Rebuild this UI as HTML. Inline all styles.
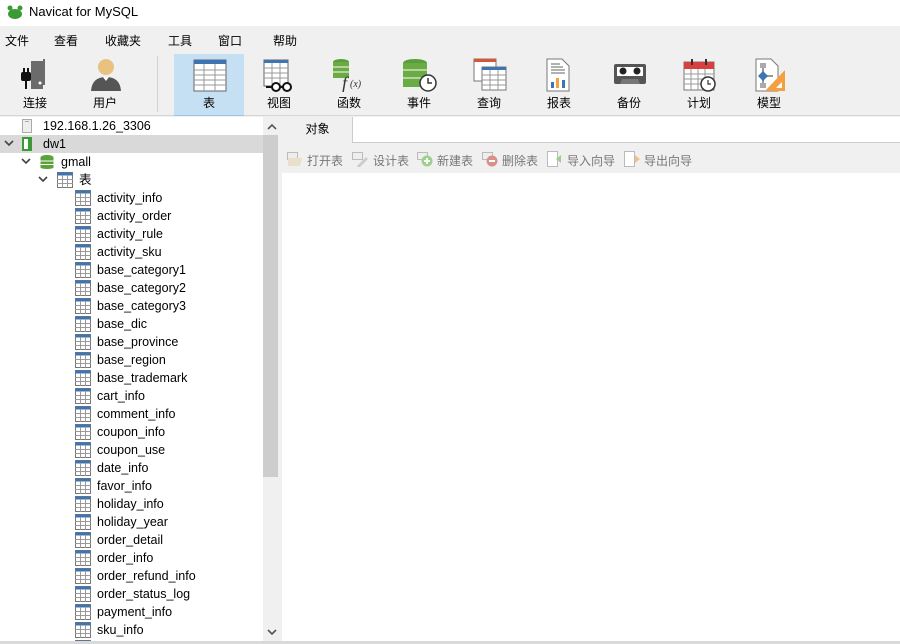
<!DOCTYPE html>
<html><head><meta charset="utf-8">
<style>
*{margin:0;padding:0;box-sizing:border-box}
body{width:900px;height:644px;overflow:hidden;background:#f0f0f0;font-family:"Liberation Sans","Noto Sans CJK SC",sans-serif;font-size:12px;color:#000;position:relative}
.abs{position:absolute}
#title{left:0;top:0;width:900px;height:26px;background:#fff}
#title span{position:absolute;left:29px;top:4px;font-size:13px}
#menu{top:26px;left:0;width:900px;height:26px;background:#f0f0f0}
#menu span{position:absolute;top:6px;font-size:12px}
#tb{top:52px;left:0;width:900px;height:64px;background:#f0f0f0;border-bottom:1px solid #d6d6d6}
.btn{position:absolute;top:2px;width:70px;height:62px;text-align:center}
.btn svg{position:absolute;left:19px;top:4px}
.btn .l{position:absolute;left:0;width:100%;top:40px;font-size:12px}
#left{left:0;top:117px;width:263px;height:524px;background:#fff;overflow:hidden}
.row{position:absolute;left:0;width:263px;height:18px;line-height:18px;font-size:12.5px;white-space:nowrap}
.row span{position:absolute}
.chev{position:absolute;top:5px}
#sb{left:263px;top:117px;width:18px;height:524px;background:#f0f0f0}
#thumb{left:263px;top:135px;width:15px;height:342px;background:#cdcdcd}
#bottom{left:0;top:641px;width:900px;height:3px;background:#d9d9d9}
</style></head><body>
<div id="title" class="abs">
<svg class="abs" style="left:7px;top:5px" width="16" height="14" viewBox="0 0 16 14"><ellipse cx="8" cy="9" rx="7" ry="5" fill="#3a9b34"/><circle cx="3" cy="3" r="2.5" fill="#3a9b34"/><circle cx="13" cy="3" r="2.5" fill="#3a9b34"/></svg>
<span>Navicat for MySQL</span></div>
<div id="menu" class="abs">
<span style="left:5px">文件</span><span style="left:54px">查看</span><span style="left:105px">收藏夹</span><span style="left:168px">工具</span><span style="left:218px">窗口</span><span style="left:273px">帮助</span></div>
<div id="tb" class="abs">
 <div class="btn" style="left:0">
  <svg width="34" height="34" viewBox="0 0 34 34"><rect x="12" y="3" width="12" height="28" fill="#6b6b6b"/><rect x="24" y="1" width="2" height="26" fill="#6b6b6b"/><circle cx="21" cy="25" r="1.5" fill="#fff"/><rect x="2" y="14" width="10" height="9" rx="2" fill="#111"/><rect x="4" y="10" width="2" height="5" fill="#111"/><rect x="8" y="10" width="2" height="5" fill="#111"/><rect x="6" y="22" width="2" height="9" fill="#111"/></svg>
  <div class="l">连接</div></div>
 <div class="btn" style="left:70px">
  <svg width="34" height="34" viewBox="0 0 34 34"><circle cx="17" cy="9" r="8" fill="#e8c27e"/><path d="M2 33 Q3 19 17 19 Q31 19 32 33Z" fill="#555"/><path d="M14 19 L17 23 L20 19Z" fill="#fff"/></svg>
  <div class="l">用户</div></div>
 <div class="abs" style="left:157px;top:4px;width:1px;height:56px;background:#d0d0d0"></div>
 <div class="btn" style="left:174px;width:70px;background:#c5dff3;border-bottom:1px solid #9cc4e8">
  <svg width="34" height="34" viewBox="0 0 34 34"><rect x="1" y="2" width="32" height="31" fill="#fff" stroke="#666"/><rect x="1" y="2" width="32" height="4" fill="#3f74b3"/><path d="M1 12H33M1 17H33M1 22H33M1 27H33M11 6V33M22 6V33" stroke="#999"/></svg>
  <div class="l">表</div></div>
 <div class="btn" style="left:244px">
  <svg width="34" height="34" viewBox="0 0 34 34"><rect x="1" y="2" width="24" height="26" fill="#fff" stroke="#666"/><rect x="1" y="2" width="24" height="3" fill="#3f74b3"/><path d="M1 10H25M1 15H25M1 20H25M9 5V28M17 5V28" stroke="#999"/><circle cx="13" cy="29" r="4" fill="#fff" stroke="#111" stroke-width="2"/><circle cx="24" cy="29" r="4" fill="#fff" stroke="#111" stroke-width="2"/><path d="M17 29H20M9 29H3" stroke="#111" stroke-width="2"/></svg>
  <div class="l">视图</div></div>
 <div class="btn" style="left:314px">
  <svg width="34" height="34" viewBox="0 0 34 34"><ellipse cx="8" cy="4" rx="8" ry="3" fill="#5a9e3c"/><rect x="0" y="4" width="16" height="16" fill="#6aab44"/><path d="M0 9H16M0 14H16" stroke="#fff"/><text x="9" y="31" font-family="Liberation Serif" font-style="italic" font-size="18" fill="#333">f</text><text x="17" y="29" font-family="Liberation Serif" font-style="italic" font-size="10" fill="#333">(x)</text></svg>
  <div class="l">函数</div></div>
 <div class="btn" style="left:384px">
  <svg width="34" height="34" viewBox="0 0 34 34"><ellipse cx="12" cy="5" rx="12" ry="4" fill="#5a9e3c"/><rect x="0" y="5" width="24" height="24" fill="#6aab44"/><path d="M0 12H24M0 20H24" stroke="#fff"/><circle cx="25" cy="25" r="8" fill="#fff" stroke="#333" stroke-width="1.5"/><path d="M25 20V25H29" stroke="#333" stroke-width="1.5" fill="none"/></svg>
  <div class="l">事件</div></div>
 <div class="btn" style="left:454px">
  <svg width="34" height="34" viewBox="0 0 34 34"><rect x="1" y="1" width="22" height="22" fill="#fff" stroke="#777"/><rect x="1" y="1" width="22" height="3" fill="#d9543a"/><rect x="9" y="9" width="24" height="23" fill="#fff" stroke="#777"/><rect x="9" y="9" width="24" height="3" fill="#3f74b3"/><path d="M9 17H33M9 22H33M9 27H33M17 12V32M25 12V32" stroke="#999"/></svg>
  <div class="l">查询</div></div>
 <div class="btn" style="left:524px">
  <svg width="34" height="34" viewBox="0 0 34 34"><path d="M4 1H19L26 8V33H4Z" fill="#fff" stroke="#777"/><path d="M8 6H17M8 9H20M8 12H22M8 15H22" stroke="#666"/><rect x="8" y="24" width="3" height="6" fill="#3f74b3"/><rect x="13" y="20" width="3" height="10" fill="#f5a040"/><rect x="19" y="22" width="3" height="8" fill="#3f74b3"/></svg>
  <div class="l">报表</div></div>
 <div class="btn" style="left:594px">
  <svg width="34" height="34" viewBox="0 0 34 34"><rect x="1" y="6" width="32" height="20" rx="2" fill="#555"/><rect x="4" y="9" width="26" height="9" fill="#fff"/><circle cx="10" cy="13" r="3.5" fill="#222"/><circle cx="24" cy="13" r="3.5" fill="#222"/><path d="M7 26L9 21H25L27 26" fill="#777"/></svg>
  <div class="l">备份</div></div>
 <div class="btn" style="left:664px">
  <svg width="34" height="34" viewBox="0 0 34 34"><rect x="1" y="4" width="30" height="28" fill="#fff" stroke="#777"/><rect x="1" y="4" width="30" height="7" fill="#d84040"/><rect x="8" y="1" width="2" height="6" fill="#333"/><rect x="22" y="1" width="2" height="6" fill="#333"/><path d="M1 16H31M1 21H31M1 26H31M8 11V32M15 11V32M22 11V32" stroke="#999"/><circle cx="25" cy="26" r="7" fill="#fff" stroke="#333" stroke-width="1.5"/><path d="M25 22V26H28" stroke="#333" stroke-width="1.2" fill="none"/></svg>
  <div class="l">计划</div></div>
 <div class="btn" style="left:734px">
  <svg width="34" height="34" viewBox="0 0 34 34"><path d="M3 1H18L25 8V33H3Z" fill="#fff" stroke="#777"/><path d="M10 8V28M10 18H20" stroke="#999" stroke-width="2"/><rect x="7" y="5" width="6" height="5" fill="#aaa"/><rect x="7" y="25" width="6" height="5" fill="#aaa"/><path d="M10 13L15 18L10 23L5 18Z" fill="#3f74b3"/><path d="M32 12V33H12Z" fill="#f5a040"/><path d="M29 24V30H23Z" fill="#fff"/></svg>
  <div class="l">模型</div></div>
</div>

<div id="left" class="abs">
 <div class="row" style="top:0"><svg class="abs" style="left:22px;top:2px" width="10" height="14"><rect x="0.5" y="0.5" width="9" height="13" fill="#eee" stroke="#aaa"/><rect x="3" y="2" width="4" height="1" fill="#aaa"/></svg><span style="left:43px">192.168.1.26_3306</span></div>
 <div class="row" style="top:18px;background:#d9d9d9"><svg class="chev" style="left:4px" width="10" height="7"><path d="M1 1L5 5L9 1" stroke="#444" stroke-width="1.6" fill="none"/></svg><svg class="abs" style="left:22px;top:2px" width="10" height="14"><rect x="0" y="0" width="10" height="14" fill="#3a9b34"/><rect x="2" y="2" width="4" height="10" fill="#fff"/></svg><span style="left:43px">dw1</span></div>
 <div class="row" style="top:36px"><svg class="chev" style="left:21px" width="10" height="7"><path d="M1 1L5 5L9 1" stroke="#444" stroke-width="1.6" fill="none"/></svg><svg class="abs" style="left:40px;top:2px" width="14" height="14"><ellipse cx="7" cy="2.5" rx="6.5" ry="2.5" fill="#5aa23a"/><rect x="0.5" y="2.5" width="13" height="10" fill="#5aa23a"/><ellipse cx="7" cy="12.5" rx="6.5" ry="1.5" fill="#5aa23a"/><path d="M0.5 6H13.5M0.5 9.5H13.5" stroke="#fff"/></svg><span style="left:61px">gmall</span></div>
 <div class="row" style="top:54px"><svg class="chev" style="left:38px" width="10" height="7"><path d="M1 1L5 5L9 1" stroke="#444" stroke-width="1.6" fill="none"/></svg><svg class="abs" style="left:57px;top:1px" width="16" height="16"><rect x="0.5" y="0.5" width="15" height="15" fill="#fff" stroke="#777"/><rect x="0.5" y="0.5" width="15" height="3" fill="#3f74b3"/><path d="M0 7.5H16M0 11.5H16M5.5 3V16M10.5 3V16" stroke="#999"/></svg><span style="left:79px">表</span></div>
 <div id="items"></div>
</div>
<div id="sb" class="abs"><svg class="abs" style="left:4px;top:6px" width="10" height="7"><path d="M1 6L5 2L9 6" stroke="#555" stroke-width="1.6" fill="none"/></svg><svg class="abs" style="left:4px;top:512px" width="10" height="7"><path d="M1 1L5 5L9 1" stroke="#555" stroke-width="1.6" fill="none"/></svg></div>
<div id="thumb" class="abs"></div>

<div class="abs" style="left:282px;top:117px;width:71px;height:26px;background:#f0f0f0;text-align:center;line-height:25px;font-size:12px">对象</div>
<div class="abs" style="left:352px;top:117px;width:548px;height:26px;background:#fff;border-left:1px solid #ccc;border-bottom:1px solid #ccc"></div>
<div class="abs" style="left:282px;top:143px;width:618px;height:30px;background:#f0f0f0;color:#777;font-size:12px">
 <svg class="abs" style="left:5px;top:9px" width="16" height="15"><rect x="0.5" y="0.5" width="10" height="7" fill="#eee" stroke="#bbb"/><path d="M1 6H15L13 14H1Z" fill="#eadfc8"/></svg><span class="abs" style="left:25px;top:9px">打开表</span>
 <svg class="abs" style="left:70px;top:9px" width="16" height="15"><rect x="0.5" y="0.5" width="10" height="7" fill="#eee" stroke="#bbb"/><path d="M5 14L14 5L16 7L7 16Z" fill="#ccc"/></svg><span class="abs" style="left:91px;top:9px">设计表</span>
 <svg class="abs" style="left:135px;top:9px" width="16" height="15"><rect x="0.5" y="0.5" width="10" height="7" fill="#eee" stroke="#bbb"/><circle cx="10" cy="9" r="5.5" fill="#9fd08b"/><path d="M10 6V12M7 9H13" stroke="#fff" stroke-width="2"/></svg><span class="abs" style="left:155px;top:9px">新建表</span>
 <svg class="abs" style="left:200px;top:9px" width="16" height="15"><rect x="0.5" y="0.5" width="10" height="7" fill="#eee" stroke="#bbb"/><circle cx="10" cy="9" r="5.5" fill="#d9908a"/><path d="M7 9H13" stroke="#fff" stroke-width="2"/></svg><span class="abs" style="left:220px;top:9px">删除表</span>
 <svg class="abs" style="left:265px;top:8px" width="16" height="16"><rect x="0.5" y="0.5" width="10" height="15" fill="#fff" stroke="#bbb"/><path d="M9 8L14 4V12Z" fill="#9fd08b"/></svg><span class="abs" style="left:285px;top:9px">导入向导</span>
 <svg class="abs" style="left:342px;top:8px" width="16" height="16"><rect x="0.5" y="0.5" width="10" height="15" fill="#fff" stroke="#bbb"/><path d="M16 8L11 4V12Z" fill="#f2c08a"/></svg><span class="abs" style="left:362px;top:9px">导出向导</span>
</div>
<div class="abs" style="left:282px;top:173px;width:618px;height:468px;background:#fff"></div>
<div id="bottom" class="abs"></div>

<script>
var n=["activity_info","activity_order","activity_rule","activity_sku","base_category1","base_category2","base_category3","base_dic","base_province","base_region","base_trademark","cart_info","comment_info","coupon_info","coupon_use","date_info","favor_info","holiday_info","holiday_year","order_detail","order_info","order_refund_info","order_status_log","payment_info","sku_info","spu_info"];
var ic='<svg class="abs" style="left:75px;top:1px" width="16" height="16"><rect x="0.5" y="0.5" width="15" height="15" fill="#fff" stroke="#777"/><rect x="0.5" y="0.5" width="15" height="3" fill="#3f74b3"/><path d="M0 7.5H16M0 11.5H16M5.5 3V16M10.5 3V16" stroke="#999"/></svg>';
var h="";for(var i=0;i<n.length;i++){h+='<div class="row" style="top:'+(72+i*18)+'px">'+ic+'<span style="left:97px">'+n[i]+'</span></div>';}
document.getElementById("items").innerHTML=h;
</script>
</body></html>
